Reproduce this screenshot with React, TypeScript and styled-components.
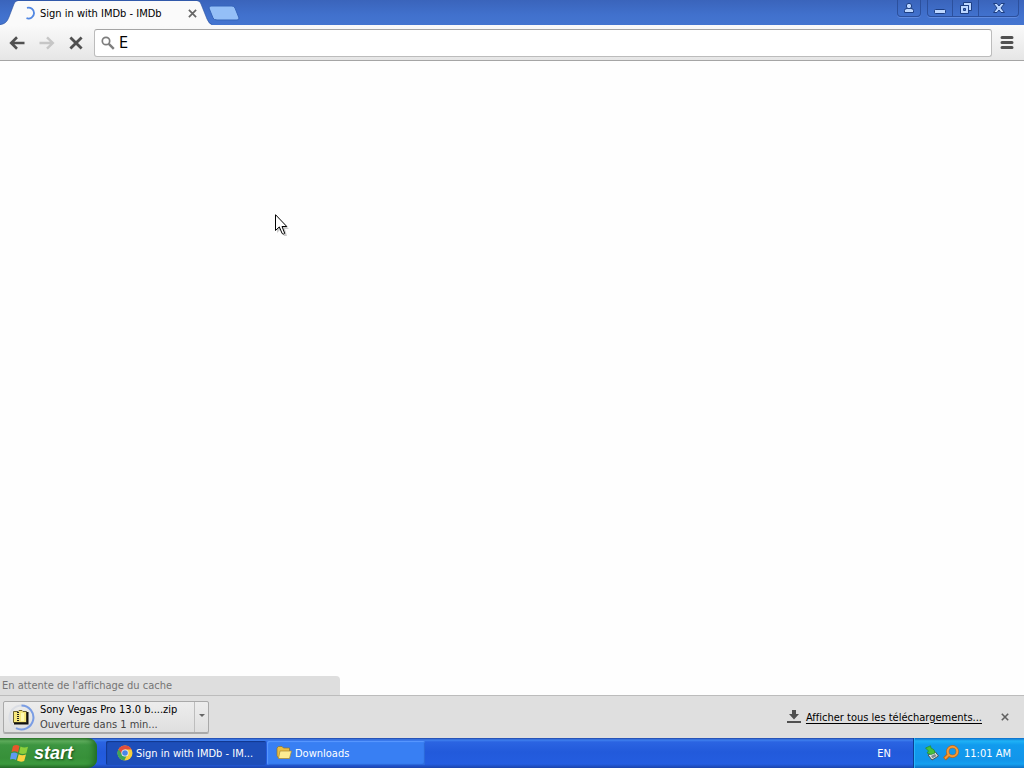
import React from "react";
import styled, { createGlobalStyle, css } from "styled-components";

const Global = createGlobalStyle`
  * { box-sizing: border-box; }
  body { margin: 0; font-family: "DejaVu Sans Condensed", "Noto Sans", sans-serif; font-size: 11px; line-height: 15px; color: #000; font-variant-ligatures: none; }
  button, input { font: inherit; color: inherit; margin: 0; padding: 0; border: 0; background: none; }
  svg { display: block; flex: none; }
`;

const Desktop = styled.div`
  display: flex;
  flex-direction: column;
  min-height: 100vh;
  background: #fefefe;
`;

const TitleBar = styled.header`
  display: flex;
  align-items: flex-start;
  height: 25px;
  background: linear-gradient(#3a64bb, #4171cd 60%, #4475d0);
`;

const Tab = styled.div`
  position: relative;
  display: flex;
  align-items: center;
  width: 212px;
  height: 25px;
  padding: 1px 13px 0 23px;
`;

const TabShape = styled.svg`
  position: absolute;
  inset: 0;
`;

const TabTitle = styled.span`
  position: relative;
  flex: 1;
  margin-left: 4px;
  white-space: nowrap;
`;

const Spinner = styled.svg`
  position: relative;
`;

const IconButton = styled.button<{ $width: number }>`
  position: relative;
  display: flex;
  align-items: center;
  justify-content: center;
  width: ${(p) => p.$width}px;
  height: 24px;
`;

const NewTab = styled.button`
  margin: 5px auto 0 -4px;
`;

const WindowButtons = styled.div<{ $gap: number }>`
  display: flex;
  height: 17px;
  margin-right: ${(p) => p.$gap}px;
  border: 1px solid #2c509d;
  border-top: 0;
  border-radius: 0 0 4px 4px;
  box-shadow: 0 1px 0 #5f8be0;
`;

const WindowButton = styled.button<{ $width: number }>`
  display: flex;
  align-items: center;
  justify-content: center;
  width: ${(p) => p.$width}px;
  height: 16px;
  & + & { border-left: 1px solid #2c509d; }
`;

const Toolbar = styled.nav`
  display: flex;
  align-items: center;
  height: 36px;
  padding: 0 2px;
  background: linear-gradient(#fafafa, #e6e6e6);
  border-bottom: 1px solid #a5a5a5;
`;

const AddressBox = styled.label`
  display: flex;
  flex: 1;
  align-items: center;
  height: 28px;
  margin: 0 0 0 4px;
  padding: 0 6px;
  gap: 4px;
  background: #fff;
  border: 1px solid #bcbcbc;
  border-top-color: #a4a4a4;
  border-radius: 3px;
`;

const AddressInput = styled.input`
  flex: 1;
  min-width: 0;
  font-size: 16px;
  line-height: 20px;
  outline: 0;
`;

const Page = styled.main`
  position: relative;
  display: flex;
  flex: 1;
  align-items: flex-end;
`;

const Pointer = styled.svg`
  position: absolute;
  left: 275px;
  top: 153px;
`;

const StatusBubble = styled.div`
  width: 340px;
  height: 19px;
  padding: 2px;
  color: #757575;
  background: #dedede;
  border-radius: 0 4px 0 0;
`;

const Shelf = styled.section`
  display: flex;
  align-items: center;
  height: 43px;
  padding: 0 11px 0 3px;
  background: #dfdfdf;
  border-top: 1px solid #bcbcbc;
`;

const DownloadItem = styled.div`
  display: flex;
  width: 206px;
  height: 32px;
  margin-right: auto;
  background: linear-gradient(#ededed, #dfdfdf);
  border: 1px solid #a9a9a9;
  border-radius: 2px;
  box-shadow: 0 1px 0 #aaa;
`;

const DownloadOpen = styled.button`
  display: flex;
  flex: 1;
  align-items: center;
  padding-left: 4px;
  gap: 5px;
  text-align: left;
  white-space: nowrap;
`;

const DownloadState = styled.span`
  display: block;
  color: #444;
`;

const DownloadMenu = styled.button`
  display: flex;
  align-items: center;
  justify-content: center;
  width: 14px;
  padding-bottom: 4px;
  border-left: 1px solid #bdbdbd;
`;

const AllDownloads = styled.a`
  display: flex;
  align-items: center;
  gap: 5px;
  margin-right: 15px;
  color: #000;
  text-underline-offset: 2px;
`;

const Taskbar = styled.footer`
  display: flex;
  height: 30px;
  color: #fff;
  background: linear-gradient(#1f45a5 0, #3f80ee 2px, #2b64e2 4px, #225adb 14px, #245de0 26px, #1b44ac 30px);
`;

const StartButton = styled.button`
  display: flex;
  align-items: center;
  gap: 5px;
  width: 97px;
  padding-left: 10px;
  background: linear-gradient(#2d762d 0, #5eac5c 3px, #3c9540 7px, #379039 20px, #3c9a3e 26px, #256a28 30px);
  border-radius: 0 9px 9px 0;
  box-shadow: inset -6px 0 6px -3px #1f6a22;
  color: #fff;
  font-family: "Liberation Sans", sans-serif;
  font-size: 18px;
  font-weight: 700;
  font-style: italic;
  line-height: 24px;
  text-shadow: 1px 1px 2px #184e1a;
`;

const TaskList = styled.div`
  display: flex;
  flex: 1;
  gap: 1px;
  padding: 3px 0 3px 9px;
`;

const TaskButton = styled.button<{ $active?: boolean }>`
  display: flex;
  align-items: center;
  gap: 3px;
  width: ${(p) => (p.$active ? 160 : 158)}px;
  padding-left: ${(p) => (p.$active ? 11 : 9)}px;
  white-space: nowrap;
  border-radius: 2px;
  ${(p) =>
    p.$active
      ? css`
          background: #1d4eb9;
          box-shadow: inset 1px 1px 1px #12388e;
        `
      : css`
          background: #387ff3;
          box-shadow: inset 1px 1px 1px #5a9aff, inset -1px -1px 1px #2b68d8;
        `}
`;

const Language = styled.button`
  width: 58px;
  color: #fff;
`;

const Tray = styled.div`
  display: flex;
  align-items: center;
  gap: 3px;
  width: 111px;
  padding-left: 10px;
  background: linear-gradient(#0d6cc9 0, #1fb2f6 3px, #119bee 7px, #1295ea 22px, #14a0f0 26px, #0e70c4 30px);
  border-left: 1px solid #0c3f94;
  box-shadow: inset 1px 0 0 #28b6fa;
`;

const Clock = styled.time`
  margin-left: 2px;
  white-space: nowrap;
`;

const Cross = ({ size, width, color }: { size: number; width: number; color: string }) => (
  <svg width={size} height={size} viewBox="0 0 10 10" stroke={color} strokeWidth={width}>
    <path d="M1 1 9 9M9 1 1 9" />
  </svg>
);

export default function App() {
  return (
    <Desktop>
      <Global />
      <TitleBar>
        <Tab>
          <TabShape width="212" height="25" viewBox="0 0 212 25">
            <path d="M0 25C5 24 7 22 9 17L14 4Q15 1 18 1H197Q200 1 201 4L207 19Q209 24 212 25Z" fill="#fafafa" />
            <path d="M0 24.500C5 24 7 22 9 17L14 4Q15 .5 18 .5H197Q200 .5 201 4L207 19Q209 24 212 24.500" fill="none" stroke="#2c529f" strokeOpacity=".6" />
          </TabShape>
          <Spinner width="13" height="14" viewBox="0 0 13 14" fill="none">
            <path d="M4 1.800A5.500 5.500 0 1 1 3.500 12.200" stroke="#5187e2" strokeWidth="1.800" />
          </Spinner>
          <TabTitle>Sign in with IMDb - IMDb</TabTitle>
          <IconButton $width={14} aria-label="Close tab"><Cross size={9} width={1.9} color="#666" /></IconButton>
        </Tab>
        <NewTab aria-label="New tab">
          <svg width="32" height="16" viewBox="0 0 32 16">
            <path d="M3 1H24Q26 1 27 3L31 13Q31 15 29 15H9Q6 15 5 13L1 3Q1 1 3 1Z" fill="#94bff7" stroke="#3564b9" />
          </svg>
        </NewTab>
        <WindowButtons $gap={6}>
          <WindowButton $width={22} aria-label="Profile">
            <svg width="12" height="12" viewBox="0 0 12 12" fill="#bdd7ff" stroke="#1d3f84">
              <path d="M1.500 10.500V8.500Q1.500 6.500 4 6.500H8Q10.500 6.500 10.500 8.500V10.500Z" /><circle cx="6" cy="4" r="2.700" />
            </svg>
          </WindowButton>
        </WindowButtons>
        <WindowButtons $gap={5}>
          <WindowButton $width={24} aria-label="Minimize">
            <svg width="12" height="12" viewBox="0 0 12 12"><rect x=".5" y="7.500" width="11" height="4" rx="1" fill="#bdd7ff" stroke="#1d3f84" /></svg>
          </WindowButton>
          <WindowButton $width={26} aria-label="Restore">
            <svg width="14" height="14" viewBox="0 0 14 14">
              <path d="M4.500 1.500H12.500V9.500H4.500Z" fill="#bdd7ff" stroke="#1d3f84" />
              <path d="M7 4H10V7H7Z" fill="#1d3f84" />
              <path d="M1.500 4.500H9.500V12.500H1.500Z" fill="#bdd7ff" stroke="#1d3f84" />
              <path d="M4.500 7.500H6.500V9.500H4.500Z" fill="#4171cd" stroke="#1d3f84" />
            </svg>
          </WindowButton>
          <WindowButton $width={40} aria-label="Close window">
            <svg width="14" height="12" viewBox="0 0 14 12">
              <path d="M1.500 1.500H5L7 4 9 1.500H12.500L9 6 12.500 10.500H9L7 8 5 10.500H1.500L5 6Z" fill="#bdd7ff" stroke="#1d3f84" />
            </svg>
          </WindowButton>
        </WindowButtons>
      </TitleBar>

      <Toolbar>
        <IconButton $width={30} aria-label="Back">
          <svg width="16" height="14" viewBox="0 0 16 14" fill="none" stroke="#505050" strokeWidth="2.600"><path d="M15.500 7H2.500M8 1.300 2.200 7 8 12.700" /></svg>
        </IconButton>
        <IconButton $width={29} aria-label="Forward" disabled>
          <svg width="16" height="14" viewBox="0 0 16 14" fill="none" stroke="#c6c6c6" strokeWidth="2.400"><path d="M.5 7H13.500M8 1.300 13.800 7 8 12.700" /></svg>
        </IconButton>
        <IconButton $width={29} aria-label="Stop"><Cross size={14} width={2} color="#505050" /></IconButton>
        <AddressBox>
          <svg width="14" height="14" viewBox="0 0 14 14" fill="none" stroke="#7d7d7d">
            <circle cx="5" cy="5" r="3.700" strokeWidth="1.700" /><path d="m7.800 7.800 5 5" strokeWidth="2.400" />
          </svg>
          <AddressInput aria-label="Address" defaultValue="E" />
        </AddressBox>
        <IconButton $width={30} aria-label="Menu">
          <svg width="14" height="13" viewBox="0 0 14 13" stroke="#505050" strokeWidth="3" strokeLinecap="round"><path d="M2 1.500H12M2 6.500H12M2 11.500H12" /></svg>
        </IconButton>
      </Toolbar>

      <Page>
        <StatusBubble role="status">En attente de l'affichage du cache</StatusBubble>
        <Pointer width="15" height="23" viewBox="0 0 15 23">
          <path d="M2 3V19L6 15 9 22H12L10 15H14Z" fill="#000" opacity=".2" />
          <path d="M.5 .7V16.500L4.300 12.900 7.200 19.600Q8.500 20.700 9.700 19.300L7 12.500H11.800Z" fill="#fff" stroke="#000" />
        </Pointer>
      </Page>

      <Shelf>
        <DownloadItem>
          <DownloadOpen>
            <svg width="27" height="27" viewBox="0 0 27 27" fill="none">
              <circle cx="13.500" cy="13.500" r="12" stroke="#dadde4" strokeWidth="2" />
              <path d="M13.500 1.500A12 12 0 1 1 8 24.200" stroke="#7a9de4" strokeWidth="2" />
              <path d="M5.500 7.500H10L11 6.500H14L15 7.500H18.500V18.500H5.500Z" fill="#f6e77c" stroke="#6b6130" />
              <path d="M6 19.500H19.500V8" stroke="#111" strokeWidth="2" />
              <path d="M10 8V18" stroke="#222" strokeWidth="2" strokeDasharray="1 1" />
              <path d="M13 9H16V17H13Z" fill="#fff9b4" />
            </svg>
            <span>
              Sony Vegas Pro 13.0 b....zip
              <DownloadState>Ouverture dans 1 min...</DownloadState>
            </span>
          </DownloadOpen>
          <DownloadMenu aria-label="Download options">
            <svg width="6" height="3" viewBox="0 0 6 3"><path d="M0 0H6L3 3Z" fill="#666" /></svg>
          </DownloadMenu>
        </DownloadItem>
        <AllDownloads href="#">
          <svg width="14" height="14" viewBox="0 0 14 14" fill="#505050"><path d="M5 0H9V4H12L7 9.500 2 4H5ZM0 11H14V13H0Z" /></svg>
          Afficher tous les téléchargements...
        </AllDownloads>
        <IconButton $width={16} aria-label="Close downloads bar"><Cross size={8} width={2} color="#606060" /></IconButton>
      </Shelf>

      <Taskbar>
        <StartButton>
          <svg width="19" height="19" viewBox="0 0 19 19">
            <path d="M3 2Q6 0 9.500 2L8 8.500Q5 6.500 1.500 8Z" fill="#e8572b" />
            <path d="M10.500 2.500Q14 4.500 18 2.800L16.300 9.300Q12.500 10.800 9 9Z" fill="#8dcf3b" />
            <path d="M1.200 9.300Q4.500 7.700 7.700 9.800L6 16Q3 14.200 0 15.500Z" fill="#5f9af2" />
            <path d="M8.700 10.200Q12 12 16 10.500L14.200 17Q10.500 18.500 7 16.500Z" fill="#fbd240" />
          </svg>
          start
        </StartButton>
        <TaskList>
          <TaskButton $active>
            <svg width="16" height="16" viewBox="0 0 16 16">
              <circle cx="8" cy="8" r="7.500" fill="#f7cf3c" />
              <path d="M8 8 1.500 4.200A7.500 7.500 0 0 0 7.300 15.500L10.500 9Z" fill="#3fa556" />
              <path d="M1.500 4.200A7.500 7.500 0 0 1 14.700 4.600H8L5 9.300Z" fill="#e04e3d" />
              <circle cx="8" cy="8" r="3.600" fill="#f2f2f2" /><circle cx="8" cy="8" r="2.800" fill="#4a86e8" />
            </svg>
            Sign in with IMDb - IM...
          </TaskButton>
          <TaskButton>
            <svg width="16" height="14" viewBox="0 0 16 14">
              <path d="M1 2 2.500 .5H6L7.500 2H13.500V12H2.500L1 10Z" fill="#e8be45" stroke="#8c722c" strokeWidth=".7" />
              <path d="M4 5H15.500L13.500 12.500H2.500Z" fill="#fcec92" stroke="#a98a32" strokeWidth=".7" />
            </svg>
            Downloads
          </TaskButton>
        </TaskList>
        <Language>EN</Language>
        <Tray>
          <svg width="16" height="16" viewBox="0 0 16 16">
            <path d="M4 10 11 6.500 14.500 11 8 15Z" fill="#dfe4e2" stroke="#4b5552" />
            <path d="M7 11 11 9 12.500 11 8.500 13.200Z" fill="#7d8a90" />
            <path d="M1.500 3 6.500 .8 7 3Q11 4 11 8L7 9.500 3 8 4.500 6Z" fill="#45c13c" stroke="#238a2c" strokeWidth=".7" />
          </svg>
          <svg width="16" height="16" viewBox="0 0 16 16" fill="none">
            <path d="m6 9.500-4.500 4.500" stroke="#b8651a" strokeWidth="4" />
            <circle cx="9.500" cy="6.500" r="4.800" stroke="#b8651a" strokeWidth="3.200" />
            <circle cx="9.500" cy="6.500" r="4.800" stroke="#f59a35" strokeWidth="2" />
            <path d="m6 9.500-4 4" stroke="#f59a35" strokeWidth="2" />
          </svg>
          <Clock>11:01 AM</Clock>
        </Tray>
      </Taskbar>
    </Desktop>
  );
}
